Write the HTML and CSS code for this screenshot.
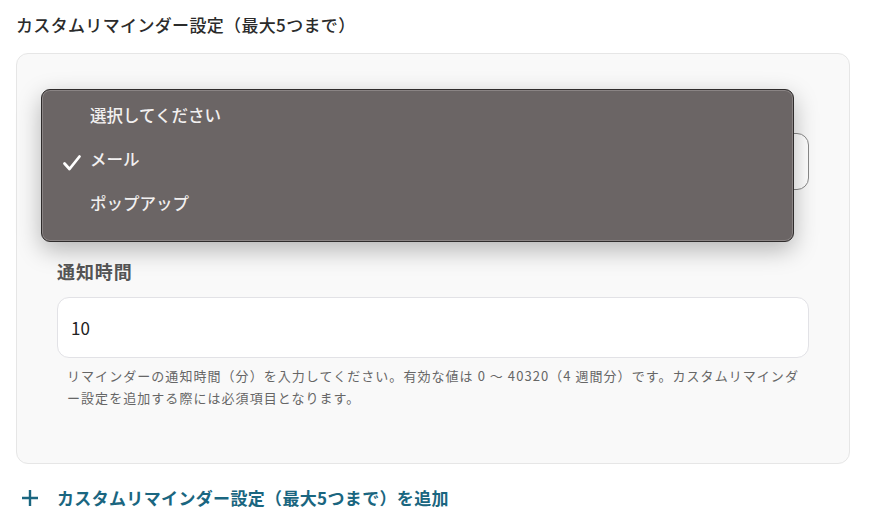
FILE: index.html
```html
<!DOCTYPE html>
<html lang="ja">
<head>
<meta charset="utf-8">
<link rel="stylesheet" href="styles.css">
</head>
<body>
<div class="page">
  <h2 class="title">カスタムリマインダー設定（最大5つまで）</h2>
  <div class="card">
    <div class="field">
      <div class="select-wrap">
        <div class="select"></div>
        <div class="menu">
          <div class="item">選択してください</div>
          <div class="item checked">
            <svg class="check" width="20" height="18" viewBox="0 0 20 18"><path d="M2.5 9.5 L7.5 15 L17.5 2.5" fill="none" stroke="#fff" stroke-width="2.8" stroke-linecap="round" stroke-linejoin="round"/></svg>
            メール
          </div>
          <div class="item">ポップアップ</div>
        </div>
      </div>
    </div>
    <div class="field field-time">
      <div class="label">通知時間</div>
      <div class="input">10</div>
      <p class="help">リマインダーの通知時間（分）を入力してください。有効な値は 0 〜 40320（4 週間分）です。カスタムリマインダー設定を追加する際には必須項目となります。</p>
    </div>
  </div>
  <div class="add">
    <svg class="plus" width="18" height="18" viewBox="0 0 18 18"><path d="M9 1 V17 M1 9 H17" stroke="#1a6680" stroke-width="2.4"/></svg>
    <span>カスタムリマインダー設定（最大5つまで）を追加</span>
  </div>
</div>
</body>
</html>
```

FILE: styles.css
```css
* { box-sizing: border-box; }
html, body { margin: 0; padding: 0; background: #fff; }
body {
  font-family: "Noto Sans CJK JP", "Noto Sans", sans-serif;
  color: #333;
  width: 878px;
  height: 528px;
  overflow: hidden;
}
.page { padding: 12px 28px 0 16px; }
.title {
  margin: 0;
  font-size: 17px;
  font-weight: 500;
  line-height: 26px;
  letter-spacing: 0.02em;
  color: #2b2b2b;
}
.card {
  margin-top: 15px;
  background: #f9f9f9;
  border: 1px solid #e6e6e6;
  border-radius: 12px;
  padding: 79px 40px 44px 40px;
  height: 411px;
}
.field { display: flex; flex-direction: column; }
.label {
  font-size: 18px;
  font-weight: 700;
  color: #555;
  line-height: 26px;
  letter-spacing: 0.05em;
}
.select-wrap { position: relative; }
.select {
  height: 57px;
  background: #fff;
  border: 1px solid #8a8a8a;
  border-radius: 12px;
}
.menu {
  position: absolute;
  left: -16px;
  top: -44px;
  width: 753px;
  height: 153px;
  background: #6b6565;
  border: 1px solid #2f2c2c;
  box-shadow: inset 0 0 0 1px #8a8484, 0 8px 24px rgba(0,0,0,0.28);
  border-radius: 9px;
  padding-top: 3px;
}
.item {
  position: relative;
  height: 44px;
  display: flex;
  align-items: center;
  padding-left: 48px;
  font-size: 16.5px;
  font-weight: 500;
  color: #f2f0f0;
}
.check { position: absolute; left: 20px; top: 17px; }
.field-time { margin-top: 68px; }
.field-time .label { margin-bottom: 13px; }
.input {
  height: 61px;
  background: #fff;
  border: 1px solid #e2e2e6;
  border-radius: 12px;
  padding: 0 13px;
  display: flex;
  align-items: center;
  font-size: 17px;
  color: #222;
}
.help {
  margin: 7px 0 0 10px;
  font-size: 13px;
  line-height: 22px;
  color: #666;
  letter-spacing: 1.05px;
}
.add {
  display: flex;
  align-items: center;
  margin-top: 21px;
  color: #1a6680;
  font-size: 17px;
  font-weight: 700;
  letter-spacing: 0.02em;
}
.plus { margin-left: 5px; margin-right: 18px; }
```
